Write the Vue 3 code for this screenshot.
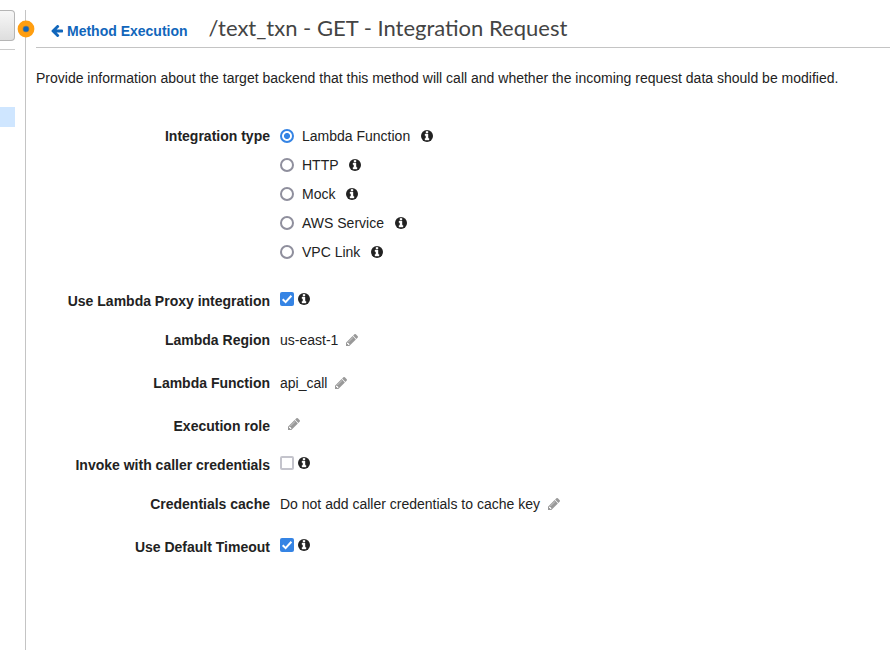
<script setup>
import { ref } from 'vue'

const INFO =
  'M1152 1376v-160q0-14-9-23t-23-9h-96v-512q0-14-9-23t-23-9h-320q-14 0-23 9t-9 23v160q0 14 9 23t23 9h96v320h-96q-14 0-23 9t-9 23v160q0 14 9 23t23 9h448q14 0 23-9t9-23zm-128-896v-160q0-14-9-23t-23-9h-192q-14 0-23 9t-9 23v160q0 14 9 23t23 9h192q14 0 23-9t9-23z'
const PENCIL =
  'M491 1536l91-91-235-235-91 91v107h128v128h107zm523-928q0-22-22-22-10 0-17 7l-542 542q-7 7-7 17 0 22 22 22 10 0 17-7l542-542q7-7 7-17zm-54-192l416 416-832 832h-416v-416zm683 96q0 53-37 90l-166 166-416-416 166-165q36-38 90-38 53 0 91 38l235 234q37 39 37 91z'

const types = ['Lambda Function', 'HTTP', 'Mock', 'AWS Service', 'VPC Link']
const selected = ref('Lambda Function')

const rows = ref([
  { label: 'Use Lambda Proxy integration', kind: 'check', checked: true },
  { label: 'Lambda Region', kind: 'text', value: 'us-east-1' },
  { label: 'Lambda Function', kind: 'text', value: 'api_call' },
  { label: 'Execution role', kind: 'text', value: '' },
  { label: 'Invoke with caller credentials', kind: 'check', checked: false },
  { label: 'Credentials cache', kind: 'text', value: 'Do not add caller credentials to cache key' },
  { label: 'Use Default Timeout', kind: 'check', checked: true },
])
</script>

<template>
  <div class="page">
    <aside class="sidebar">
      <div class="side-button"></div>
      <div class="side-line"></div>
      <div class="side-active"></div>
    </aside>
    <div class="divider">
      <svg class="handle" viewBox="0 0 18 18">
        <circle cx="9" cy="9" r="8.4" fill="#ff9e10" />
        <circle cx="9" cy="9" r="3.3" fill="#8a7f60" />
        <circle cx="9" cy="9" r="2.6" fill="#1166bb" />
      </svg>
    </div>
    <main class="main">
      <header class="header">
        <a class="back">
          <svg class="arrow" viewBox="128 192 1536 1536"><path d="M1664 896v128q0 53-32.500 90.500t-84.500 37.500h-704l293 294q38 36 38 90t-38 90l-75 76q-37 37-90 37-52 0-91-37l-651-652q-37-37-37-90 0-52 37-91l651-650q38-38 91-38 52 0 90 38l75 74q38 38 38 91t-38 91l-293 293h704q52 0 84.500 37.500t32.500 90.500z" /></svg>
          <span>Method Execution</span>
        </a>
        <h1 class="title">/text_txn - GET - Integration Request</h1>
      </header>
      <p class="intro">Provide information about the target backend that this method will call and whether the incoming request data should be modified.</p>

      <form class="form">
        <div class="row types">
          <span class="label">Integration type</span>
          <div class="options">
            <label v-for="t in types" :key="t" class="option" @click="selected = t">
              <span class="radio" :class="{ on: selected === t }"></span>
              <span>{{ t }}</span>
              <svg class="info" viewBox="128 128 1536 1536"><circle cx="896" cy="896" r="768" /><path :d="INFO" /></svg>
            </label>
          </div>
        </div>
        <div v-for="r in rows" :key="r.label" class="row" :class="[r.kind, { blank: r.kind === 'text' && !r.value }]">
          <span class="label">{{ r.label }}</span>
          <div v-if="r.kind === 'check'" class="control">
            <span class="box" :class="{ on: r.checked }" @click="r.checked = !r.checked">
              <svg v-if="r.checked" viewBox="0 0 14 14"><path d="M2.700 7.200L5.600 10.100L11.400 3.800" /></svg>
            </span>
            <svg class="info" viewBox="128 128 1536 1536"><circle cx="896" cy="896" r="768" /><path :d="INFO" /></svg>
          </div>
          <div v-else class="value">
            <span>{{ r.value }}</span>
            <svg class="pencil" viewBox="128 149 1515 1515"><path :d="PENCIL" /></svg>
          </div>
        </div>
      </form>
    </main>
  </div>
</template>

<style>
body {
  background: #fff;
  overflow: hidden;
}
</style>

<style scoped>
.page {
  display: flex;
  box-sizing: border-box;
  width: 890px;
  height: 650px;
  padding-top: 10px;
  overflow: hidden;
  font: 14px/20px "Liberation Sans", Arial, sans-serif;
  color: #222;
}
.sidebar {
  flex: none;
  width: 15px;
  margin-right: 10px;
}
.side-button {
  box-sizing: border-box;
  height: 31px;
  border: 1px solid #b5b5b5;
  border-left: 0;
  border-radius: 0 4px 4px 0;
  background: linear-gradient(#f7f7f7, #dedede);
}
.side-line {
  height: 1px;
  margin-top: 8px;
  background: #ccc;
}
.side-active {
  height: 20px;
  margin-top: 57px;
  background: #cfe6ff;
}
.divider {
  position: relative;
  flex: none;
  width: 1px;
  margin-right: 10px;
  background: #c4c4c4;
}
.handle {
  position: absolute;
  top: 10.400px;
  left: -8.500px;
  width: 18px;
  height: 18px;
}
.main {
  flex: 1;
  min-width: 0;
}
.header {
  display: flex;
  align-items: center;
  height: 37px;
  padding-left: 15px;
  border-bottom: 1px solid #c4c4c4;
}
.back {
  display: flex;
  align-items: center;
  width: 157px;
  padding-top: 5px;
  gap: 4px;
  font-weight: bold;
  color: #1166bb;
  white-space: nowrap;
}
.arrow {
  width: 12px;
  height: 12px;
  fill: currentColor;
}
.title {
  margin: 0 0 2px 0.400px;
  font: 400 22px/30px Lato, Carlito, sans-serif;
  color: #444;
  white-space: nowrap;
}
.intro {
  margin: 20px 0 38px;
  white-space: nowrap;
}
.row {
  display: grid;
  grid-template-columns: 234px auto;
  column-gap: 10px;
  height: 20px;
  margin-bottom: 23px;
}
.row.types {
  height: 145px;
  margin-bottom: 20px;
}
.row.check,
.row.blank {
  margin-bottom: 19px;
}
.label {
  font-weight: bold;
  text-align: right;
  white-space: nowrap;
}
.option {
  display: flex;
  align-items: center;
  height: 20px;
  margin-bottom: 9px;
}
.radio {
  box-sizing: border-box;
  width: 14px;
  height: 14px;
  margin-right: 8px;
  border: 2px solid #8f8f9d;
  border-radius: 50%;
}
.radio.on {
  border-color: #3584e4;
  background: radial-gradient(circle, #3584e4 2.700px, #fff 3.300px);
}
.info {
  width: 12px;
  height: 12px;
  fill: #222;
}
.info path {
  fill: #fff;
  stroke: #fff;
  stroke-width: 50;
}
.option .info {
  margin-left: 10.700px;
}
.control {
  display: flex;
  align-items: center;
  height: 16px;
  gap: 4px;
}
.box {
  box-sizing: border-box;
  width: 14px;
  height: 14px;
  border: 2px solid #c4c4cc;
  border-radius: 2px;
}
.box.on {
  border: 0;
  background: #3584e4;
}
.box svg {
  display: block;
  fill: none;
  stroke: #fff;
  stroke-width: 2;
}
.value {
  display: flex;
  align-items: center;
  height: 20px;
  gap: 8px;
  white-space: nowrap;
}
.blank .value {
  height: 16px;
}
.pencil {
  width: 12px;
  height: 12px;
  fill: #999;
}
</style>
